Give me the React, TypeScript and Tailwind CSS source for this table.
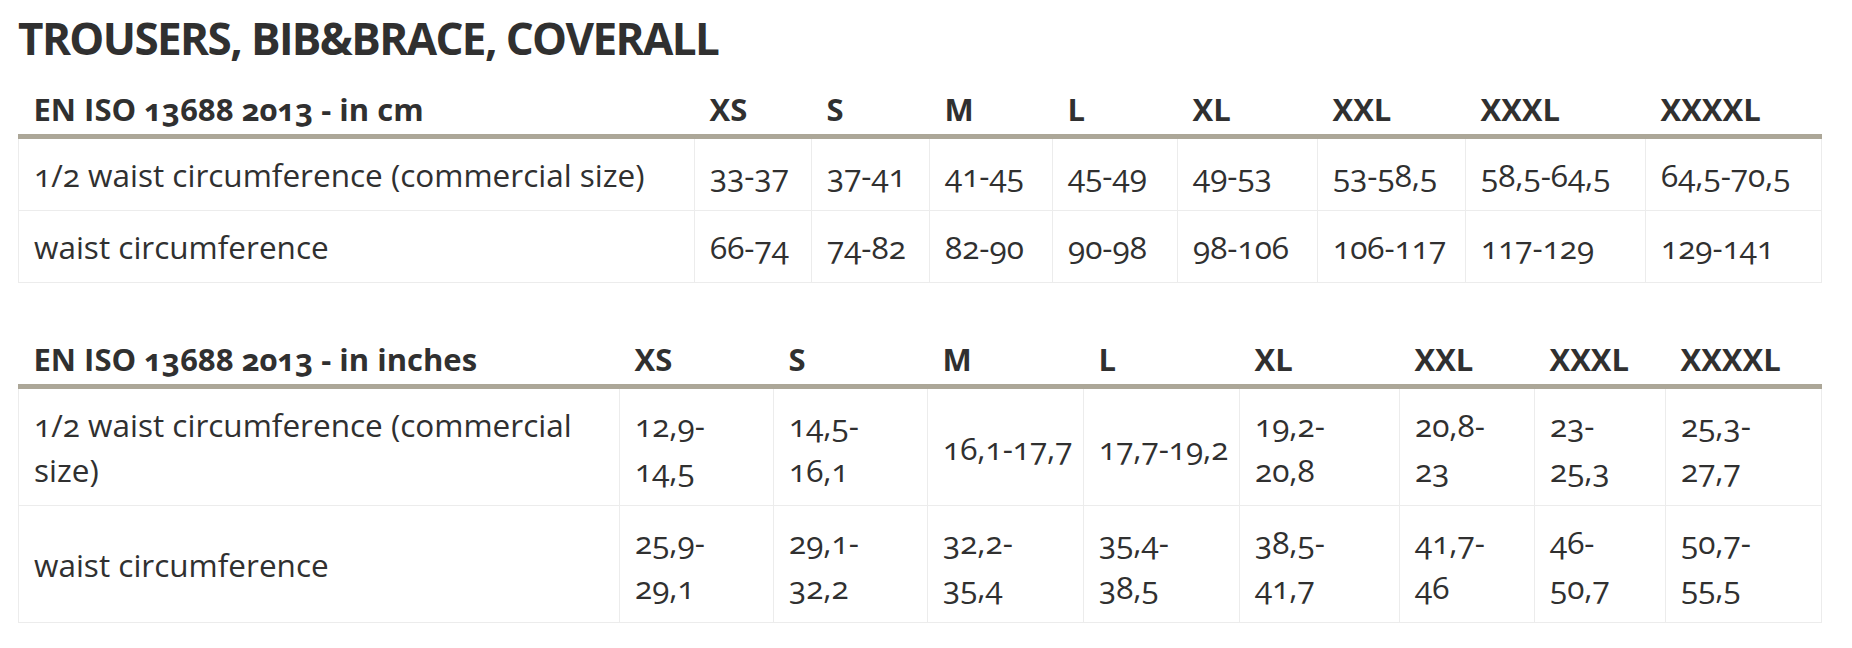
const sizes = ['XS', 'S', 'M', 'L', 'XL', 'XXL', 'XXXL', 'XXXXL'];

type Row = { label: string; values: string[] };

// column widths, label column first
const cmCols = ['w-[676px]', 'w-[117px]', 'w-[118px]', 'w-[123px]', 'w-[125px]', 'w-[140px]', 'w-[148px]', 'w-[180px]', 'w-[176px]'];
const inchCols = ['w-[601px]', 'w-[154px]', 'w-[154px]', 'w-[156px]', 'w-[156px]', 'w-[160px]', 'w-[135px]', 'w-[131px]', 'w-[156px]'];

const cmRows: Row[] = [
  {
    label: '1/2 waist circumference (commercial size)',
    values: ['33-37', '37-41', '41-45', '45-49', '49-53', '53-58,5', '58,5-64,5', '64,5-70,5'],
  },
  {
    label: 'waist circumference',
    values: ['66-74', '74-82', '82-90', '90-98', '98-106', '106-117', '117-129', '129-141'],
  },
];

const inchRows: Row[] = [
  {
    label: '1/2 waist circumference (commercial\nsize)',
    values: ['12,9-\n14,5', '14,5-\n16,1', '16,1-17,7', '17,7-19,2', '19,2-\n20,8', '20,8-\n23', '23-\n25,3', '25,3-\n27,7'],
  },
  {
    label: 'waist circumference',
    values: ['25,9-\n29,1', '29,1-\n32,2', '32,2-\n35,4', '35,4-\n38,5', '38,5-\n41,7', '41,7-\n46', '46-\n50,7', '50,7-\n55,5'],
  },
];

const SizeTable = ({ heading, cols, rows, className }: { heading: string; cols: string[]; rows: Row[]; className: string }) => {
  return (
    <table className={`table-fixed border-collapse w-[1803px] ${className}`}>
      <colgroup>
        {cols.map((c, i) => (
          <col key={i} className={c} />
        ))}
      </colgroup>
      <thead>
        <tr>
          {[heading, ...sizes].map((h) => (
            <th
              key={h}
              className="text-left align-bottom px-[15px] pb-[5px] border-b-[5px] border-[#aca798] font-stretch-[88%] font-bold text-[31px] leading-[40px] whitespace-nowrap oldstyle-nums"
            >
              {h}
            </th>
          ))}
        </tr>
      </thead>
      <tbody>
        {rows.map((row) => (
          <tr key={row.label}>
            {[row.label, ...row.values].map((v, i) => (
              <td
                key={i}
                className="px-[15px] py-[13px] border border-[#ececec] align-middle text-[31.5px] leading-[45px] whitespace-pre oldstyle-nums"
              >
                {v}
              </td>
            ))}
          </tr>
        ))}
      </tbody>
    </table>
  );
};

export default function App() {
  return (
    <div className="bg-white w-[1852px] h-[648px] overflow-hidden pl-[18px] pt-[15px] text-[#303030] font-['Open_Sans',sans-serif]">
      <h1 className="font-stretch-[88%] font-bold text-[44px] leading-[46px] tracking-[-1.6px]">
        TROUSERS, BIB&amp;BRACE, COVERALL
      </h1>
      <SizeTable heading="EN ISO 13688 2013 - in cm" cols={cmCols} rows={cmRows} className="mt-[28px]" />
      <SizeTable heading="EN ISO 13688 2013 - in inches" cols={inchCols} rows={inchRows} className="mt-[56px]" />
    </div>
  );
}
